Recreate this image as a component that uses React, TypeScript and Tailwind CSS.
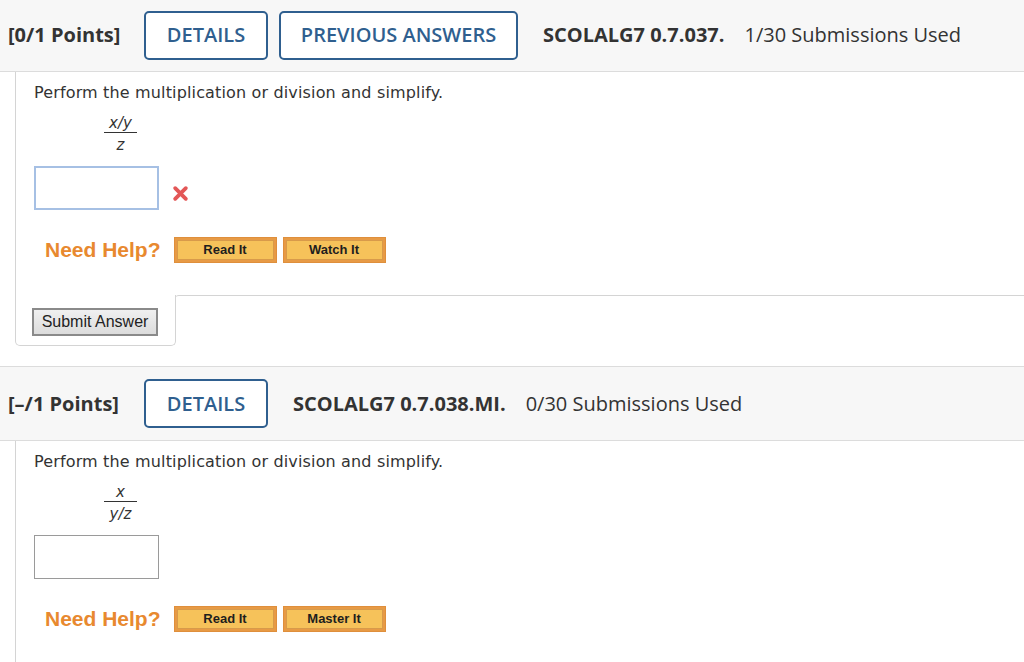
import React from "react";

const headFont = { fontFamily: '"Open Sans", "Liberation Sans", sans-serif' };
const bodyFont = { fontFamily: '"DejaVu Sans", Verdana, sans-serif' };
const arial = { fontFamily: '"Liberation Sans", Arial, sans-serif' };

const OutlineBtn = ({ label, w }: { label: string; w: string }) => (
    <div
        className={`${w} h-[49px] flex items-center justify-center rounded-[5px] border-2 border-[#2f5f8f] bg-white text-[#2f5f8f] text-[20px] font-semibold`}
    >
        {label}
    </div>
);

const Header = ({
    points,
    buttons,
    code,
    used,
    className,
}: {
    points: string;
    buttons: { label: string; w: string }[];
    code: string;
    used: string;
    className?: string;
}) => (
    <div
        className={`flex items-center bg-[#f7f7f7] border-b border-[#dcdcdc] pl-[8px] ${className ?? ""}`}
        style={headFont}
    >
        <span className="text-[20px] font-bold text-[#333] w-[136px]">{points}</span>
        <div className="flex gap-[11px]">
            {buttons.map((b) => (
                <OutlineBtn key={b.label} label={b.label} w={b.w} />
            ))}
        </div>
        <span className="ml-[25px] text-[20px] font-bold text-[#333]">{code}</span>
        <span className="ml-[20px] text-[20px] text-[#333]">{used}</span>
    </div>
);

const HelpBtn = ({ label }: { label: string }) => (
    <div className="w-[103px] h-[26px] border border-[#df8f3c] bg-[#e79a45] p-[2px]">
        <div
            className="w-full h-full border border-[#d89a4a] bg-[#f6c25a] flex items-center justify-center text-[13px] font-bold text-[#1e1e1e]"
            style={arial}
        >
            {label}
        </div>
    </div>
);

const NeedHelp = ({ second }: { second: string }) => (
    <div className="flex items-center ml-[11px]">
        <span className="text-[21px] font-bold text-[#e8892f] mr-[13px]" style={arial}>
            Need Help?
        </span>
        <div className="flex gap-[6px]">
            <HelpBtn label="Read It" />
            <HelpBtn label={second} />
        </div>
    </div>
);

const Fraction = ({ top, bottom }: { top: string; bottom: string }) => (
    <div className="ml-[70px] w-[33px] flex flex-col items-center italic text-[15px] text-[#333]" style={bodyFont}>
        <span className="w-full text-center leading-[18px] border-b border-[#333]">{top}</span>
        <span className="leading-[18px] pt-[3px]">{bottom}</span>
    </div>
);

export default function App() {
    return (
        <div className="w-[1024px] h-[662px] bg-white overflow-hidden">
            <Header
                className="h-[73px] -mt-[1px]"
                points="[0/1 Points]"
                buttons={[
                    { label: "DETAILS", w: "w-[124px]" },
                    { label: "PREVIOUS ANSWERS", w: "w-[239px]" },
                ]}
                code="SCOLALG7 0.7.037."
                used="1/30 Submissions Used"
            />
            <div className="ml-[15px] border-l border-[#d4d4d4] pl-[18px] pt-[11px] h-[223px]">
                <p className="text-[16px] leading-[20px] tracking-[0.15px] text-[#333]" style={bodyFont}>
                    Perform the multiplication or division and simplify.
                </p>
                <div className="mt-[11px]">
                    <Fraction top="x/y" bottom="z" />
                </div>
                <div className="mt-[12px] flex items-center">
                    <div className="w-[125px] h-[44px] border-2 border-[#a6c0e4] bg-white" />
                    <svg className="ml-[13px] mt-[11px]" width="17" height="17" viewBox="0 0 16 16">
                        <path d="M3 3 L13 13 M13 3 L3 13" stroke="#e35757" strokeWidth="3.6" strokeLinecap="round" />
                    </svg>
                </div>
                <div className="mt-[24px]">
                    <NeedHelp second="Watch It" />
                </div>
            </div>
            <div className="flex ml-[15px] h-[51px]">
                <div className="w-[161px] border-l border-r border-b border-[#d4d4d4] rounded-b-[5px] pl-[16px] pt-[13px]">
                    <button
                        className="w-[126px] h-[28px] border-2 border-[#8a8a8a] bg-gradient-to-b from-[#f0f0f0] to-[#dcdcdc] text-[16px] text-[#222] leading-none"
                        style={arial}
                    >
                        Submit Answer
                    </button>
                </div>
                <div className="flex-1 border-t border-[#d4d4d4] rounded-tl-[4px] -ml-[1px]" />
            </div>
            <Header
                className="h-[75px] mt-[20px] border-t"
                points="[–/1 Points]"
                buttons={[{ label: "DETAILS", w: "w-[124px]" }]}
                code="SCOLALG7 0.7.038.MI."
                used="0/30 Submissions Used"
            />
            <div className="ml-[15px] border-l border-[#d4d4d4] pl-[18px] pt-[11px] h-[260px]">
                <p className="text-[16px] leading-[20px] tracking-[0.15px] text-[#333]" style={bodyFont}>
                    Perform the multiplication or division and simplify.
                </p>
                <div className="mt-[11px]">
                    <Fraction top="x" bottom="y/z" />
                </div>
                <div className="mt-[12px] flex items-center">
                    <div className="w-[125px] h-[44px] border border-[#9a9a9a] bg-white" />
                </div>
                <div className="mt-[24px]">
                    <NeedHelp second="Master It" />
                </div>
            </div>
        </div>
    );
}
